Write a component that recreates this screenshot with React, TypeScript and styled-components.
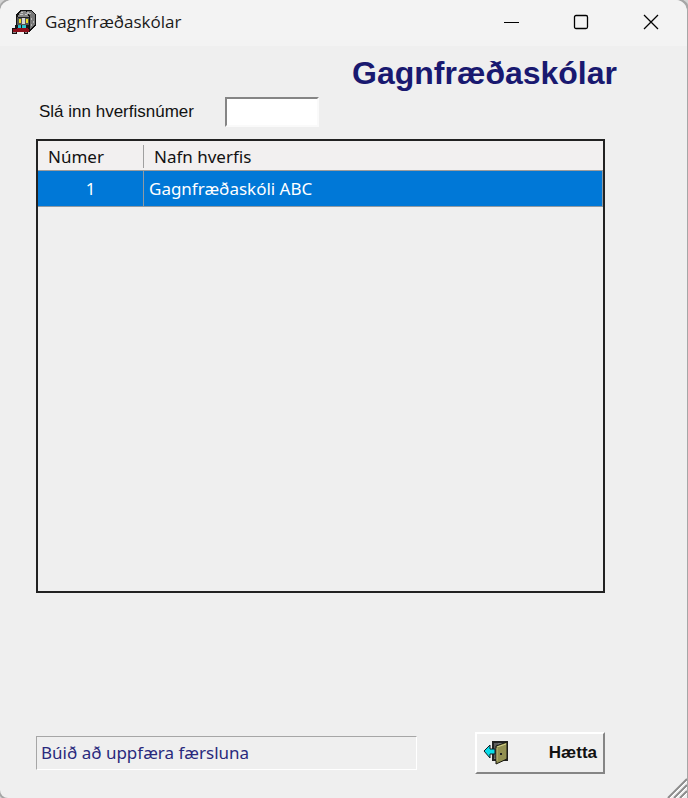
import React from "react";
import styled, { createGlobalStyle } from "styled-components";

const ui = `"Noto Sans", "Open Sans", sans-serif`;
const classic = `"Liberation Sans", Arial, sans-serif`;

const GlobalStyle = createGlobalStyle`
  *, *::before, *::after { box-sizing: border-box; }
  body { margin: 0; background: #d4d4d4; }
`;

const Window = styled.div`
  position: relative;
  display: flex;
  flex-direction: column;
  min-height: 100vh;
  overflow: hidden;
  background: #efefef;
  border-right: 1px solid #a6a6a6;
  border-radius: 12px 12px 0 8px;
  box-shadow: 0 0 0 2px #a6a6a6;
  color: #111;
`;

const TitleBar = styled.header`
  display: flex;
  align-items: center;
  height: 46px;
  padding: 0 1px 2px 12px;
  background: #f3f3f3;
`;

const WindowTitle = styled.span`
  flex: 1;
  padding-left: 9px;
  font: 17px/24px "Open Sans", "Noto Sans", sans-serif;
  color: #1a1a1a;
`;

const CaptionButton = styled.button`
  display: grid;
  place-items: center;
  width: 70px;
  height: 44px;
  padding: 0;
  border: 0;
  background: transparent;
  color: #000;
`;

const Content = styled.main`
  display: flex;
  flex: 1;
  flex-direction: column;
  padding: 8px 82px 24px 36px;
`;

const Heading = styled.h1`
  align-self: flex-end;
  margin: 0 -12px 0 0;
  font: bold 32px/38px ${classic};
  color: #191970;
`;

const SearchRow = styled.div`
  display: flex;
  align-items: center;
  gap: 32px;
  height: 30px;
  margin: 5px 0 12px;
  padding-left: 3px;
`;

const SearchLabel = styled.label`
  width: 154px;
  white-space: nowrap;
  font: 17px/24px ${classic};
`;

const SearchInput = styled.input`
  width: 94px;
  height: 30px;
  padding: 0 4px;
  border: 2px solid;
  border-color: #858585 #fafafa #fafafa #858585;
  border-radius: 0;
  outline: 0;
  background: #fff;
  font: 17px/24px ${classic};
`;

const GridFrame = styled.div`
  flex: 1;
  min-height: 120px;
  border: 2px solid #222;
`;

const Grid = styled.table`
  width: 100%;
  table-layout: fixed;
  border-collapse: separate;
  border-spacing: 0;
  font: 17px/24px ${ui};
`;

const HeadCell = styled.th<{ $first?: boolean }>`
  position: relative;
  width: ${(p) => (p.$first ? "106px" : "auto")};
  height: 30px;
  padding: 2px 10px 0;
  border-bottom: 1px solid #9c9c9c;
  background: #f2f0f0;
  font-weight: normal;
  text-align: left;
  white-space: nowrap;

  &::after {
    content: "";
    display: ${(p) => (p.$first ? "block" : "none")};
    position: absolute;
    top: 4px;
    right: 0;
    bottom: 2px;
    width: 1px;
    background: #a0a0a0;
  }
`;

const Cell = styled.td<{ $center?: boolean }>`
  height: 36px;
  padding: 0 5px;
  border-right: 1px solid #8f9aa3;
  border-bottom: 1px solid #8f9aa3;
  background: #0078d7;
  color: #fff;
  text-align: ${(p) => (p.$center ? "center" : "left")};
`;

const Footer = styled.footer`
  display: flex;
  align-items: center;
  justify-content: space-between;
  gap: 58px;
  margin-top: 139px;
`;

const Status = styled.output`
  flex: 1;
  max-width: 381px;
  height: 34px;
  padding: 3px 4px;
  border: 1px solid;
  border-color: #a6a6a6 #fff #fff #a6a6a6;
  font: 17px/26px ${ui};
  color: #29297c;
  white-space: nowrap;
`;

const ExitButton = styled.button`
  display: flex;
  align-items: center;
  justify-content: space-between;
  width: 130px;
  height: 42px;
  padding: 0 6px;
  border: 2px solid;
  border-color: #fff #858585 #858585 #fff;
  border-radius: 0;
  background: #efefef;
  color: #111;
  font: bold 17px/24px ${classic};
`;

const Grip = styled.svg`
  position: absolute;
  right: 0;
  bottom: 0;
`;

const SchoolIcon = () => (
  <svg width="24" height="24" viewBox="0 0 24 24" shapeRendering="crispEdges" aria-hidden="true">
    <path d="M4 5L8 0H19L24 4V15L17 22H4Z" fill="#111" />
    <path d="M6 6L9 1H14L17 7H6Z" fill="#858585" />
    <path d="M15 1H19L23 4V14L18 19V6Z" fill="#777" />
    <path d="M15 2h2v1h2v1h-4zM19 8h1v2h-1zM21 11h1v2h-1zM19 14h1v2h-1z" fill="#b5b5b5" />
    <path d="M9 2h2v1H9zM8 4h3v1H8zM13 4h2v1h-2z" fill="#c8c8c8" />
    <path d="M5 7H17V16H5Z" fill="#555" />
    <path d="M6 7h11v1H6z" fill="#222" />
    <path d="M10 8h3v6h-3z" fill="#d5d5d5" />
    <path d="M7 9h2v4H7zM14 9h2v4h-2z" fill="#e9df20" />
    <path d="M3 15h14v4H3z" fill="#181818" />
    <path d="M6 15h3v3H6zM10 15h4v3h-4z" fill="#27b9c4" />
    <path d="M0 18H18V22H16V24H12V22H5V24H0Z" fill="#181010" />
    <path d="M1 19h4v-1h11v1h1v3H1z" fill="#8e0f1a" />
    <path d="M6 16h3v2H6zM10 16h4v2h-4z" fill="#27c9d4" />
    <path d="M1 22h3v1H1zM13 22h2v1h-2z" fill="#8a8a8a" />
  </svg>
);

const DoorIcon = () => (
  <svg width="26" height="26" viewBox="0 0 26 26" aria-hidden="true">
    <path d="M9 1H25V21H9Z" fill="#222" />
    <path d="M11 3H22V19H11Z" fill="#777" />
    <path d="M12 3V18M14 3V18" stroke="#444" />
    <path d="M13 6L24 2V19L13 24Z" fill="#929052" stroke="#171710" />
    <path d="M14 7L23 4" stroke="#d1ce87" />
    <path d="M14 8V21" stroke="#c0bd78" />
    <path d="M17 13H19V15H17Z" fill="#222" />
    <path d="M1 11L7 5V9H12V14H7V18Z" fill="#08dce8" stroke="#101b20" />
  </svg>
);

export default function App() {
  return (
    <>
      <GlobalStyle />
      <Window>
        <TitleBar>
          <SchoolIcon />
          <WindowTitle>Gagnfræðaskólar</WindowTitle>
          <CaptionButton type="button" aria-label="Minimize">
            <svg width="16" height="16" viewBox="0 0 16 16">
              <path d="M1 8.5H16" stroke="currentColor" />
            </svg>
          </CaptionButton>
          <CaptionButton type="button" aria-label="Maximize">
            <svg width="16" height="16" viewBox="0 0 16 16">
              <rect x="1.5" y="1.5" width="13" height="13" rx="1.5" fill="none" stroke="currentColor" strokeWidth="1.3" />
            </svg>
          </CaptionButton>
          <CaptionButton type="button" aria-label="Close">
            <svg width="16" height="16" viewBox="0 0 16 16">
              <path d="M1 1L15 15M15 1L1 15" stroke="currentColor" strokeWidth="1.3" />
            </svg>
          </CaptionButton>
        </TitleBar>
        <Content>
          <Heading>Gagnfræðaskólar</Heading>
          <SearchRow>
            <SearchLabel htmlFor="district">Slá inn hverfisnúmer</SearchLabel>
            <SearchInput id="district" type="text" />
          </SearchRow>
          <GridFrame>
            <Grid>
              <thead>
                <tr>
                  <HeadCell $first scope="col">Númer</HeadCell>
                  <HeadCell scope="col">Nafn hverfis</HeadCell>
                </tr>
              </thead>
              <tbody>
                <tr>
                  <Cell $center>1</Cell>
                  <Cell>Gagnfræðaskóli ABC</Cell>
                </tr>
              </tbody>
            </Grid>
          </GridFrame>
          <Footer>
            <Status>Búið að uppfæra færsluna</Status>
            <ExitButton type="button">
              <DoorIcon />
              Hætta
            </ExitButton>
          </Footer>
        </Content>
        <Grip width="20" height="20" viewBox="0 0 20 20" aria-hidden="true">
          <path d="M1 20L20 1M7 20L20 7M13 20L20 13" stroke="#8c8c8c" strokeWidth="2" />
          <path d="M3 20L20 3M9 20L20 9M15 20L20 15" stroke="#fff" />
        </Grip>
      </Window>
    </>
  );
}
